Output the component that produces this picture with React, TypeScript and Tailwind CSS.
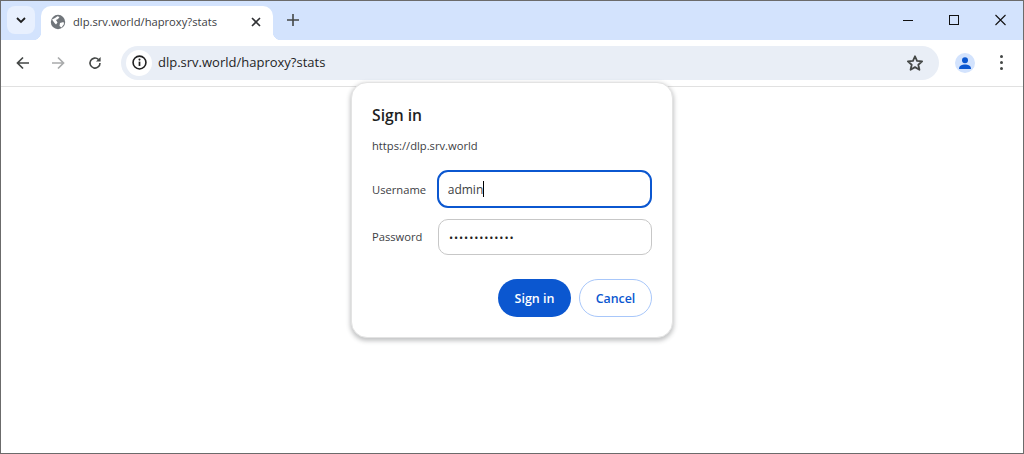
import React from 'react';

const FONT = "font-['Open_Sans','Noto_Sans',sans-serif]";

function Globe() {
  return (
    <svg width="16" height="16" viewBox="0 0 16 16" className="mb-[1px] shrink-0">
      <circle cx="8" cy="8" r="7.2" fill="#70757a" />
      <path d="M2 5.5 L5 4 L7.5 2.2 L9.5 3 L8 5 L6 6 L7.5 8.5 L6 10.5 L4.5 9 Z" fill="#fff" />
      <path d="M10 9 L13.5 8 L14 10 L11.5 13.5 L9.5 12 Z" fill="#fff" />
    </svg>
  );
}

function Tab() {
  return (
    <div className="relative ml-[6px] mt-[5px] flex h-[34px] w-[232px] items-center rounded-t-[10px] bg-white pb-[2px] pl-[9px] pr-[10px]">
      <span className="absolute bottom-0 left-[-8px] h-2 w-2 bg-[radial-gradient(circle_at_0_0,transparent_8px,#fff_8.5px)]" />
      <span className="absolute bottom-0 right-[-8px] h-2 w-2 bg-[radial-gradient(circle_at_100%_0,transparent_8px,#fff_8.5px)]" />
      <Globe />
      <span className="ml-[7px] flex-1 text-[11.2px] text-[#3c4043]">dlp.srv.world/haproxy?stats</span>
      <svg width="10" height="10" viewBox="0 0 10 10" className="mb-[1px] mr-[2px]">
        <path d="M1 1 L9 9 M9 1 L1 9" stroke="#303134" strokeWidth="1.6" />
      </svg>
    </div>
  );
}

function Field({ label, focused, children }: { label: string; focused?: boolean; children: React.ReactNode }) {
  return (
    <div className="flex items-center">
      <span className={focused ? 'w-[65px] pt-[2px] text-[11.2px] text-[#3c4043]' : 'w-[66px] pt-[1px] text-[11.2px] text-[#3c4043]'}>{label}</span>
      <div
        className={
          focused
            ? 'flex h-[38px] w-[216px] items-center rounded-[11px] border-2 border-[#0b57d0] pl-[9px] text-[12px] text-[#3c4043]'
            : 'flex h-[36px] w-[214px] items-center rounded-[10px] border border-[#c7c7c7] pl-[10px] pt-[2px] text-[12px] text-[#1f1f1f]'
        }
      >
        {children}
      </div>
    </div>
  );
}

function SignInDialog() {
  return (
    <div className="absolute left-[350px] top-[81px] flex h-[256px] w-[322px] flex-col rounded-[16px] border border-[#e3e3e3] bg-white pl-5 pr-5 pt-[19px] shadow-[0_2px_4px_1px_rgba(60,64,67,0.3)]">
      <h1 className="text-[15.7px] font-semibold leading-[26px] text-[#1f1f1f]">Sign in</h1>
      <p className="mt-[9px] text-[11.2px] leading-[18px] text-[#3c4043]">https://dlp.srv.world</p>
      <div className="mt-[15px] flex flex-col gap-[11px]">
        <Field label="Username" focused>
          <span className="pt-[2px]">admin</span>
          <span className="h-[16px] w-px bg-black" />
        </Field>
        <Field label="Password">
          <span className="text-[11px] tracking-[0.9px]">•••••••••••••</span>
        </Field>
      </div>
      <div className="mt-[24px] flex justify-end gap-2">
        <button className="h-[38px] w-[73px] rounded-full bg-[#0b57d0] pt-[2px] text-[12.5px] font-semibold text-white">Sign in</button>
        <button className="h-[38px] w-[73px] rounded-full border border-[#a8c7fa] bg-white pt-[2px] text-[12.4px] font-semibold text-[#0b57d0]">Cancel</button>
      </div>
    </div>
  );
}

export default function App() {
  return (
    <div className={`relative flex h-[454px] w-[1024px] flex-col overflow-hidden border border-[#6b6b6b] bg-white ${FONT}`}>
      {/* TAB STRIP */}
      <header className="flex h-[39px] shrink-0 items-start bg-[#d3e3fd]">
        <div className="ml-[6px] mt-[5px] flex h-[28px] w-[28px] items-center justify-center rounded-[8px] bg-[#e8f0fe]">
          <svg width="10" height="7" viewBox="0 0 10 7">
            <path d="M1 1 L5 5 L9 1" fill="none" stroke="#1f1f1f" strokeWidth="1.8" />
          </svg>
        </div>
        <Tab />
        <div className="ml-[14px] mt-[13px]">
          <svg width="12" height="12" viewBox="0 0 12 12">
            <path d="M6 0 V12 M0 6 H12" stroke="#444746" strokeWidth="1.6" />
          </svg>
        </div>
        <div className="ml-auto mt-[13px] flex items-center pr-[17px]">
          <svg width="10" height="12" viewBox="0 0 10 12">
            <path d="M0 6.5 H10" stroke="#111" strokeWidth="1" />
          </svg>
          <svg width="10" height="12" viewBox="0 0 10 12" className="ml-[36px]">
            <rect x="0.5" y="1.5" width="9" height="9" fill="none" stroke="#111" strokeWidth="1" />
          </svg>
          <svg width="11" height="12" viewBox="0 0 11 12" className="ml-[36px]">
            <path d="M0.5 1 L10.5 11 M10.5 1 L0.5 11" stroke="#111" strokeWidth="1.1" />
          </svg>
        </div>
      </header>

      {/* TOOLBAR */}
      <div className="flex h-[47px] shrink-0 items-center rounded-tr-[8px] rounded-tl-[8px] border-b border-[#e1e1e1] bg-white pb-[1px]">
        <svg width="14" height="14" viewBox="0 0 14 14" className="ml-[15px]">
          <path d="M13 7 H2 M7 1.5 L1.5 7 L7 12.5" fill="none" stroke="#444746" strokeWidth="1.7" />
        </svg>
        <svg width="14" height="14" viewBox="0 0 14 14" className="ml-[21px]">
          <path d="M1 7 H12 M7 1.5 L12.5 7 L7 12.5" fill="none" stroke="#a9abac" strokeWidth="1.7" />
        </svg>
        <svg width="14" height="14" viewBox="0 0 14 14" className="ml-[23px]">
          <path d="M12 7 A5 5 0 1 1 10.5 3.5" fill="none" stroke="#444746" strokeWidth="1.6" />
          <path d="M12.6 1 V5.6 H8 Z" fill="#444746" />
        </svg>
        <div className="ml-[19px] flex h-[34px] w-[818px] items-center rounded-full bg-[#e9eef6] pl-[5px] pr-[15px]">
          <div className="flex h-[26px] w-[26px] items-center justify-center rounded-full bg-white">
            <svg width="15" height="15" viewBox="0 0 14 14">
              <circle cx="7" cy="7" r="6" fill="none" stroke="#1f1f1f" strokeWidth="1.5" />
              <path d="M7 6.2 V10.2" stroke="#1f1f1f" strokeWidth="1.6" />
              <circle cx="7" cy="4.3" r="0.95" fill="#1f1f1f" />
            </svg>
          </div>
          <span className="ml-[6px] flex-1 text-[13px] text-[#1f1f1f]">dlp.srv.world/haproxy?stats</span>
          <svg width="18" height="18" viewBox="0 0 24 24">
            <path d="M12 3 L14.7 9.2 L21.5 9.8 L16.4 14.3 L17.9 21 L12 17.5 L6.1 21 L7.6 14.3 L2.5 9.8 L9.3 9.2 Z" fill="none" stroke="#444746" strokeWidth="2.4" strokeLinejoin="round" />
          </svg>
        </div>
        <div className="ml-[16px] flex h-5 w-5 items-center justify-center rounded-full bg-[#d3e3fd]">
          <svg width="14" height="14" viewBox="0 0 14 14">
            <circle cx="7" cy="4.2" r="3" fill="#0b57d0" />
            <path d="M1 13 C1 9.5 4 8.5 7 8.5 C10 8.5 13 9.5 13 13 Z" fill="#0b57d0" />
          </svg>
        </div>
        <div className="ml-[25px] flex flex-col gap-[3px]">
          <span className="h-[3px] w-[3px] rounded-full bg-[#444746]" />
          <span className="h-[3px] w-[3px] rounded-full bg-[#444746]" />
          <span className="h-[3px] w-[3px] rounded-full bg-[#444746]" />
        </div>
      </div>

      {/* PAGE */}
      <main className="flex-1 bg-white" />
      <SignInDialog />
    </div>
  );
}
